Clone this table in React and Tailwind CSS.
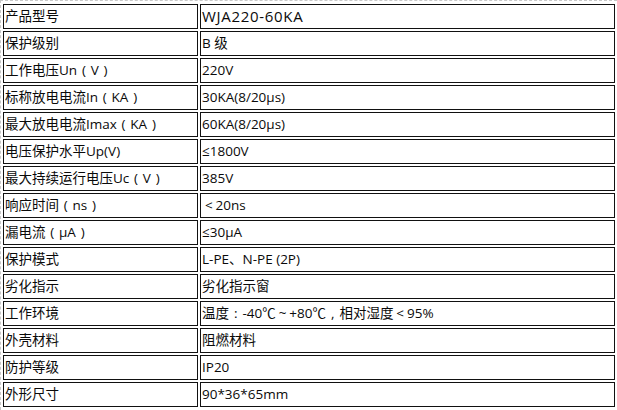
import React from "react";

const rows = [
  ["产品型号", "WJA220-60KA"],
  ["保护级别", "B 级"],
  ["工作电压Un（V）", "220V"],
  ["标称放电电流In（KA）", "30KA(8/20μs)"],
  ["最大放电电流Imax（KA）", "60KA(8/20μs)"],
  ["电压保护水平Up(V)", "≤1800V"],
  ["最大持续运行电压Uc（V）", "385V"],
  ["响应时间（ns）", "＜20ns"],
  ["漏电流（μA）", "≤30μA"],
  ["保护模式", "L-PE、N-PE (2P)"],
  ["劣化指示", "劣化指示窗"],
  ["工作环境", "温度：-40℃～+80℃，相对湿度＜95%"],
  ["外壳材料", "阻燃材料"],
  ["防护等级", "IP20"],
  ["外形尺寸", "90*36*65mm"],
];

const punct = { "（": "(", "）": ")", "：": ":", "，": ",", "～": "~", "＜": "<" };

function Txt({ s }) {
  const parts = [];
  let buf = "";
  [...s].forEach((ch, i) => {
    if (punct[ch]) {
      if (buf) parts.push(buf);
      buf = "";
      parts.push(
        <span key={i} className="inline-block w-[1em] text-center">
          {punct[ch]}
        </span>
      );
    } else {
      buf += ch;
    }
  });
  if (buf) parts.push(buf);
  return <>{parts}</>;
}

export default function App() {
  return (
    <div className="w-[617px] h-[410px] bg-white overflow-hidden">
      <div
        className="border-t border-l border-dashed border-[#c8c8c8] pt-[3px] pl-[2px] h-full text-[#0a0a0a] text-[13.5px] leading-none"
        style={{ fontFamily: '"Open Sans", "Noto Sans CJK SC", sans-serif' }}
      >
        <div className="grid grid-cols-[195px_415px] gap-[2px] auto-rows-[25px]">
          {rows.map(([k, v], i) => (
            <React.Fragment key={i}>
              <div className="border border-[#111] flex items-center pl-[1px] whitespace-nowrap overflow-hidden">
                <Txt s={k} />
              </div>
              <div
                className={
                  i === 0
                    ? "border border-[#111] flex items-center pl-[1px] whitespace-nowrap overflow-hidden text-[15px] tracking-[0.7px]"
                    : "border border-[#111] flex items-center pl-[1px] whitespace-nowrap overflow-hidden"
                }
              >
                <Txt s={v} />
              </div>
            </React.Fragment>
          ))}
        </div>
      </div>
    </div>
  );
}
